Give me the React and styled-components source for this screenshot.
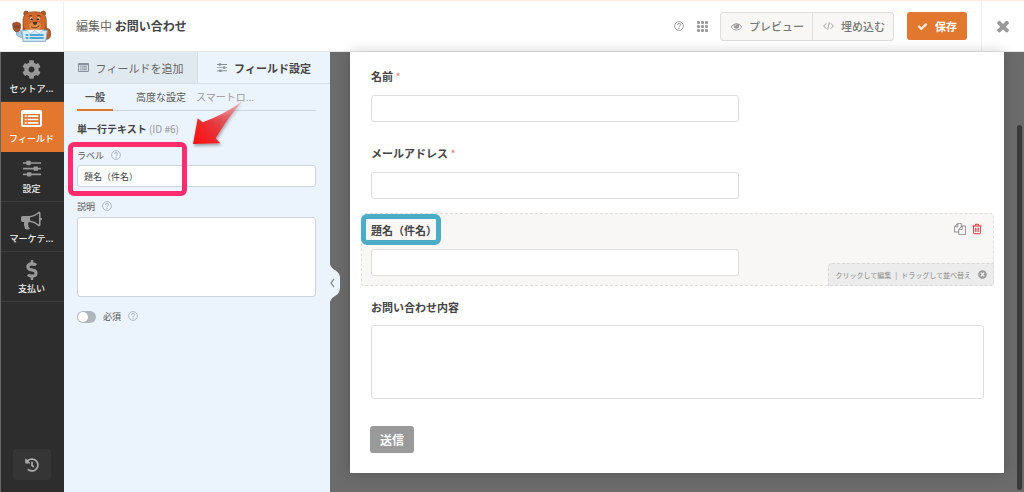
import React, { useState } from "react";
import styled, { createGlobalStyle, css } from "styled-components";
import { FaCog, FaHistory, FaDollarSign, FaTimesCircle } from "react-icons/fa";

const GlobalStyle = createGlobalStyle`
  *, *::before, *::after { box-sizing: border-box; }
  body {
    margin: 0;
    font-family: "Noto Sans CJK JP", "Noto Sans", sans-serif;
    font-size: 11px;
    line-height: 16px;
    color: #444;
    background: #6b6b6b;
  }
  button, input, textarea { font: inherit; color: inherit; margin: 0; }
  button { cursor: pointer; }
  a { color: inherit; text-decoration: none; }
  svg { display: block; flex: none; }
`;

/* ---------- icons ---------- */

const paths = {
  copy: "M1696 384q40 0 68 28t28 68v1216q0 40-28 68t-68 28h-960q-40 0-68-28t-28-68v-288h-544q-40 0-68-28t-28-68v-672q0-40 20-88t48-76l408-408q28-28 76-48t88-20h416q40 0 68 28t28 68v328q68-40 128-40h416zm-544 213l-299 299h299v-299zm-640-384l-299 299h299v-299zm196 647l316-316v-416h-384v416q0 40-28 68t-68 28h-416v640h512v-256q0-40 20-88t48-76zm956 804v-1152h-384v416q0 40-28 68t-68 28h-416v640h896z",
  trash: "M704 736v576q0 14-9 23t-23 9h-64q-14 0-23-9t-9-23v-576q0-14 9-23t23-9h64q14 0 23 9t9 23zm256 0v576q0 14-9 23t-23 9h-64q-14 0-23-9t-9-23v-576q0-14 9-23t23-9h64q14 0 23 9t9 23zm256 0v576q0 14-9 23t-23 9h-64q-14 0-23-9t-9-23v-576q0-14 9-23t23-9h64q14 0 23 9t9 23zm128 724v-948h-896v948q0 22 7 40.5t14.5 27 10.5 8.5h832q3 0 10.5-8.5t14.5-27 7-40.5zm-672-1076h448l-48-117q-7-9-17-11h-317q-10 2-17 11zm928 32v64q0 14-9 23t-23 9h-96v948q0 83-47 143.5t-113 60.5h-832q-66 0-113-58.5t-47-141.5v-952h-96q-14 0-23-9t-9-23v-64q0-14 9-23t23-9h309l70-167q15-37 54-63t79-26h320q40 0 79 26t54 63l70 167h309q14 0 23 9t9 23z",
  bullhorn: "M1664 640q53 0 90.5 37.5t37.5 90.5-37.5 90.5-90.5 37.5v384q0 52-38 90t-90 38q-417-347-812-380-58 19-91 66t-31 100.5 40 92.5q-20 33-23 65.5t6 58 33.5 55 48 50 61.5 50.5q-29 58-111.5 83t-168.5 11.5-132-55.5q-7-23-29.5-87.5t-32-94.5-23-89-15-101 3.5-98.5 22-110.5h-122q-66 0-113-47t-47-113v-192q0-66 47-113t113-47h480q435 0 896-384 52 0 90 38t38 90v384zm-128 604v-954q-394 302-768 343v270q377 42 768 341z",
  eye: "M1664 960q-152-236-381-353 61 104 61 225 0 185-131.5 316.5t-316.5 131.5-316.5-131.5-131.5-316.5q0-121 61-225-229 117-381 353 133 205 333.5 326.5t434.5 121.5 434.5-121.5 333.5-326.5zm-720-384q0-20-14-34t-34-14q-125 0-214.5 89.5t-89.5 214.5q0 20 14 34t34 14 34-14 14-34q0-86 61-147t147-61q20 0 34-14t14-34zm848 384q0 34-20 69-140 230-376.5 368.5t-499.5 138.5-499.5-139-376.5-368q-20-35-20-69t20-69q140-229 376.5-368t499.5-139 499.5 139 376.5 368q20 35 20 69z",
  check: "M1671 566q0 40-28 68l-724 724-136 136q-28 28-68 28t-68-28l-136-136-362-362q-28-28-28-68t28-68l136-136q28-28 68-28t68 28l294 295 656-657q28-28 68-28t68 28l136 136q28 28 28 68z",
  times: "M1490 1322q0 40-28 68l-136 136q-28 28-68 28t-68-28l-294-294-294 294q-28 28-68 28t-68-28l-136-136q-28-28-28-68t28-68l294-294-294-294q-28-28-28-68t28-68l136-136q28-28 68-28t68 28l294 294 294-294q28-28 68-28t68 28l136 136q28 28 28 68t-28 68l-294 294 294 294q28 28 28 68z",
};

const Glyph = ({ name, size = 12, color = "currentColor" }) => (
  <svg width={size} height={size} viewBox="0 0 1792 1792" fill={color} aria-hidden="true">
    <path d={paths[name]} />
  </svg>
);

const HelpIcon = ({ size = 10 }) => (
  <svg width={size} height={size} viewBox="0 0 20 20" fill="none" stroke="currentColor" aria-hidden="true">
    <circle cx="10" cy="10" r="8.8" strokeWidth="1.8" />
    <path d="M7 8q0-3 3-3t3 2.600q0 1.600-1.600 2.500T10 12.300" strokeWidth="2" />
    <path d="M10 13.600v2.200" strokeWidth="2.200" />
  </svg>
);

const GridIcon = () => (
  <svg width="11" height="11" viewBox="0 0 11 11" fill="#999" aria-hidden="true">
    {[0, 4, 8].map((x) =>
      [0, 4, 8].map((y) => <rect key={`${x}-${y}`} x={x} y={y} width="3" height="3" rx="1" />)
    )}
  </svg>
);

const CodeIcon = () => (
  <svg width="11" height="10" viewBox="0 0 24 20" fill="none" stroke="#999" strokeWidth="2" aria-hidden="true">
    <path d="M7 4 1.500 10 7 16M17 4l5.500 6L17 16M14 2l-4 16" />
  </svg>
);

const ListIcon = ({ width, height, color, hole }) => (
  <svg width={width} height={height} viewBox="0 0 63 51" aria-hidden="true">
    <rect width="63" height="51" rx="6" fill={color} />
    <rect x="6" y="12" width="51" height="33" fill={hole} />
    <path
      d="M11 16h6v5h-6zM20 16h32v5H20zM11 26h6v5h-6zM20 26h32v5H20zM11 36h6v5h-6zM20 36h32v5H20z"
      fill={color}
    />
  </svg>
);

const SlidersIcon = ({ width, height }) => (
  <svg width={width} height={height} viewBox="0 0 54 48" fill="currentColor" aria-hidden="true">
    <path d="M0 5h54v5H0zM0 22h54v5H0zM0 39h54v5H0z" />
    <rect x="10" y="1" width="13" height="13" rx="2" />
    <rect x="32" y="18" width="13" height="13" rx="2" />
    <rect x="12" y="35" width="13" height="13" rx="2" />
  </svg>
);

const BearLogo = () => (
  <svg width="40" height="32" viewBox="36 30 120 96" role="img" aria-label="WPForms">
    <path d="M134 88q18-8 18 14 0 16-14 16z" fill="#b95d2b" stroke="#74422d" strokeWidth="2" />
    <path d="M62 90q-12 2-14 12 6 12 22 10z" fill="#a9cce4" stroke="#7398ad" strokeWidth="2" />
    <path d="M38 72q2-6 7-3 6-6 9-1 8-1 8 8 0 18-11 20-13-1-13-24z" fill="#a9552b" stroke="#6f3c28" strokeWidth="2" />
    <path d="M45 76v7m6-8v8m5-6v6" stroke="#71351f" strokeWidth="3" />
    <circle cx="78" cy="40" r="7" fill="#b5592a" stroke="#7b4025" strokeWidth="2" />
    <circle cx="130" cy="40" r="7" fill="#b5592a" stroke="#7b4025" strokeWidth="2" />
    <path d="M69 96V60q0-25 35-25t35 25v36z" fill="#cf6a2c" stroke="#8a4724" strokeWidth="2" />
    <path d="M69 70v26h14q-10-8-14-26m70 0v26h-14q10-8 14-26" fill="#a9532a" />
    <path d="M87 77q0-10 18-10t18 10q-1 13-18 13T87 77" fill="#e18c47" />
    <ellipse cx="94" cy="57" rx="4" ry="5" fill="#f4e6dc" />
    <ellipse cx="115" cy="57" rx="4" ry="5" fill="#f4e6dc" />
    <circle cx="95" cy="58" r="3.5" fill="#372c2a" />
    <circle cx="114" cy="58" r="3.5" fill="#372c2a" />
    <path d="M86 49q5-4 10-1m15 0q6-4 11 1" stroke="#663519" strokeWidth="3" fill="none" />
    <path d="M98 66h14q-1 9-7 9t-7-9" fill="#51302a" />
    <path d="M93 80q14 8 25-3" stroke="#713c21" strokeWidth="3" fill="none" />
    <path d="M66 91h76l-5 33H69z" fill="#d8ecf8" stroke="#83abc2" strokeWidth="3" />
    <path d="M77 89l15 12 12-9 13 9 14-12" fill="#eef8ff" stroke="#9fc0d3" strokeWidth="2" />
    <path d="M77 105h8m4 0h42M77 114h8m4 0h42" stroke="#278fc6" strokeWidth="4" />
  </svg>
);

/* ---------- header ---------- */

const Page = styled.div`
  display: flex;
  flex-direction: column;
  min-height: 100vh;
`;

const Header = styled.header`
  display: flex;
  align-items: center;
  height: 52px;
  background: #fff;
  border-top: 1px solid #faede6;
  border-bottom: 1px solid #e8e8e8;
`;

const LogoCell = styled.div`
  display: flex;
  align-items: center;
  justify-content: center;
  align-self: stretch;
  width: 64px;
  border-right: 1px solid #eee;
`;

const FormTitle = styled.h1`
  flex: 1;
  margin: 0;
  padding-left: 12px;
  font-size: 12px;
  font-weight: 400;
  color: #666;
  strong { font-weight: 700; color: #444; }
`;

const HeaderTools = styled.div`
  display: flex;
  align-items: center;
  align-self: stretch;
`;

const IconButton = styled.button`
  display: flex;
  padding: 0;
  border: 0;
  background: none;
  color: ${(p) => p.$color || "#999"};
  margin-right: ${(p) => p.$gap || 0}px;
`;

const ButtonGroup = styled.div`
  display: flex;
  margin-right: 13px;
  border: 1px solid #ddd;
  border-radius: 3px;
  background: #f8f7f6;
`;

const ToolButton = styled.button`
  display: flex;
  align-items: center;
  gap: 7px;
  height: 27px;
  padding: 0 8px 0 10px;
  border: 0;
  background: none;
  font-weight: 500;
  color: #777;
  & + & { border-left: 1px solid #ddd; }
`;

const SaveButton = styled.button`
  display: flex;
  align-items: center;
  gap: 7px;
  height: 28px;
  margin-right: 14px;
  padding: 0 10px;
  border: 0;
  border-radius: 3px;
  background: #e27730;
  font-weight: 700;
  color: #fff;
`;

const CloseCell = styled.div`
  display: flex;
  align-items: center;
  justify-content: center;
  align-self: stretch;
  width: 43px;
  border-left: 1px solid #eee;
`;

/* ---------- side navigation ---------- */

const Body = styled.div`
  display: flex;
  flex: 1;
`;

const SideNav = styled.nav`
  display: flex;
  flex-direction: column;
  flex: none;
  width: 64px;
  border-left: 1px solid #666;
  background: #2d2d2d;
`;

const NavItem = styled.a`
  display: flex;
  flex-direction: column;
  align-items: center;
  justify-content: space-between;
  height: 50px;
  padding: 8px 2px 4px 0;
  border-bottom: 1px solid #3b3b3b;
  font-size: 9px;
  font-weight: 500;
  color: #eee;
  > svg { color: #999; }
  ${(p) => p.$active && css`
    background: #e27730;
    border-color: #e27730;
    color: #fff;
  `}
`;

const HistoryButton = styled.button`
  display: flex;
  align-items: center;
  justify-content: center;
  width: 38px;
  height: 31px;
  margin: auto 13px 12px 12px;
  border: 0;
  border-radius: 3px;
  background: #353535;
  color: #aaa;
`;

/* ---------- settings panel ---------- */

const Panel = styled.aside`
  position: relative;
  flex: none;
  width: 266px;
  background: #ebf3fc;
`;

const Tabs = styled.div`
  display: grid;
  grid-template-columns: 1fr 1fr;
`;

const Tab = styled.button`
  display: flex;
  align-items: center;
  justify-content: center;
  gap: 7px;
  height: 32px;
  padding: 0;
  border: 0;
  border-bottom: 1px solid #d6dfe8;
  background: ${(p) => (p.$active ? "#ebf3fc" : "#e0e8f0")};
  font-weight: ${(p) => (p.$active ? 700 : 400)};
  color: ${(p) => (p.$active ? "#444" : "#666")};
  > svg { color: #86919b; }
  & + & { border-left: 1px solid #d6dfe8; }
`;

const PanelBody = styled.div`
  padding: 0 14px 0 13px;
`;

const SubTabs = styled.div`
  display: flex;
  height: 27px;
  border-bottom: 1px solid #ced7e0;
`;

const SubTab = styled.button`
  height: 27px;
  padding: ${(p) => p.$pad};
  border: 0;
  border-bottom: 2px solid ${(p) => (p.$active ? "#e27730" : "transparent")};
  background: none;
  font-size: 10px;
  font-weight: ${(p) => (p.$active ? 700 : 400)};
  color: ${(p) => (p.$muted ? "#999" : "#555")};
`;

const FieldName = styled.h2`
  margin: 10px 0 9px;
  font-size: 10px;
  line-height: 16px;
  font-weight: 700;
  span { font-weight: 400; color: #999; }
`;

const OptionRow = styled.div`
  position: relative;
  margin-bottom: 10px;
`;

const OptionHead = styled.div`
  display: flex;
  align-items: center;
  gap: 7px;
  height: 19px;
  font-size: 9px;
  color: #555;
  > svg { color: #a9b3bd; margin-bottom: 2px; }
`;

const boxed = css`
  display: block;
  width: 100%;
  border: 1px solid #ccd3da;
  border-radius: 3px;
  background: #fff;
  outline: 0;
  resize: none;
`;

const OptionInput = styled.input`
  ${boxed}
  height: 22px;
  padding: 0 6px;
  font-size: 9px;
`;

const OptionArea = styled.textarea`
  ${boxed}
  height: 80px;
  margin-top: 1px;
`;

const ToggleRow = styled.div`
  display: flex;
  align-items: center;
  gap: 7px;
  padding-top: 2px;
  font-size: 9px;
  color: #555;
  > svg { color: #a9b3bd; margin-bottom: 2px; }
`;

const Toggle = styled.input`
  appearance: none;
  width: 19px;
  height: 12px;
  border-radius: 6px;
  background: #b0b6bd;
  &::before {
    content: "";
    display: block;
    width: 10px;
    height: 10px;
    margin: 1px;
    border-radius: 50%;
    background: #fff;
  }
  &:checked { background: #e27730; }
  &:checked::before { margin-left: 8px; }
`;

const CollapseButton = styled.button`
  position: absolute;
  top: 212px;
  left: 100%;
  z-index: 1;
  padding: 0;
  border: 0;
  background: none;
`;

/* ---------- annotations over the panels ---------- */

const Callout = styled.span`
  position: absolute;
  inset: ${(p) => p.$inset};
  border: 5px solid ${(p) => p.$color};
  border-radius: 6px;
  pointer-events: none;
`;

const ArrowMark = styled.svg`
  position: absolute;
  top: 44px;
  left: 125px;
  pointer-events: none;
`;

/* ---------- form preview ---------- */

const Preview = styled.main`
  position: relative;
  flex: 1;
  min-width: 0;
  padding: 0 20px 19px;
  background: #6b6b6b;
`;

const ScrollThumb = styled.span`
  position: absolute;
  top: 73px;
  right: 2px;
  bottom: 2px;
  width: 5px;
  border-radius: 3px;
  background: #3a3a3a;
`;

const FormSheet = styled.form`
  display: flex;
  flex-direction: column;
  gap: 4px;
  padding: 7px 10px 20px 11px;
  background: #fff;
  box-shadow: 0 0 12px rgba(0, 0, 0, 0.2);
`;

const Field = styled.div`
  position: relative;
  padding: 8px 9px 9px;
  border: 1px dashed ${(p) => (p.$selected ? "#ddd" : "transparent")};
  border-radius: 4px;
  background: ${(p) => (p.$selected ? "#f8f7f6" : "none")};
`;

const FieldLabel = styled.label`
  display: block;
  margin-bottom: ${(p) => p.$gap || 11}px;
  font-weight: 700;
  span { font-weight: 400; color: #e08080; }
`;

const LabelWrap = styled.div`
  position: relative;
  width: max-content;
`;

const FieldInput = styled.input`
  ${boxed}
  width: 60%;
  height: 27px;
  border-color: #ddd;
`;

const FieldArea = styled.textarea`
  ${boxed}
  height: 74px;
  border-color: #ddd;
`;

const FieldActions = styled.div`
  position: absolute;
  top: 9px;
  right: 10px;
  display: flex;
  gap: 5px;
`;

const FieldHint = styled.div`
  position: absolute;
  right: -1px;
  bottom: -1px;
  display: flex;
  align-items: center;
  gap: 7px;
  height: 23px;
  padding: 0 6px;
  border: 1px dashed #d8d8d8;
  border-radius: 4px 0;
  background: #ececec;
  font-size: 7px;
  font-weight: 500;
  color: #999;
  span { margin: 0 4px; }
`;

const SubmitButton = styled.button`
  align-self: flex-start;
  height: 27px;
  margin: 13px 9px 0;
  padding: 0 10px;
  border: 0;
  border-radius: 3px;
  background: #999;
  font-size: 12px;
  font-weight: 700;
  color: #fff;
`;

const navItems = [
  { label: "セットア...", icon: <FaCog size={19} /> },
  { label: "フィールド", icon: <ListIcon width={21} height={17} color="#fff" hole="#e27730" />, active: true },
  { label: "設定", icon: <SlidersIcon width={18} height={17} /> },
  { label: "マーケテ...", icon: <Glyph name="bullhorn" size={21} /> },
  { label: "支払い", icon: <FaDollarSign size={20} /> },
];

export default function App() {
  const [label, setLabel] = useState("題名（件名）");

  return (
    <Page>
      <GlobalStyle />
      <Header>
        <LogoCell><BearLogo /></LogoCell>
        <FormTitle>編集中 <strong>お問い合わせ</strong></FormTitle>
        <HeaderTools>
          <IconButton type="button" aria-label="ヘルプ" $gap={13}><HelpIcon /></IconButton>
          <IconButton type="button" aria-label="メニュー" $gap={12}><GridIcon /></IconButton>
          <ButtonGroup>
            <ToolButton type="button"><Glyph name="eye" size={11} color="#999" />プレビュー</ToolButton>
            <ToolButton type="button"><CodeIcon />埋め込む</ToolButton>
          </ButtonGroup>
          <SaveButton type="button"><Glyph name="check" size={11} color="#fbe5d7" />保存</SaveButton>
          <CloseCell>
            <IconButton type="button" aria-label="閉じる"><Glyph name="times" size={18} /></IconButton>
          </CloseCell>
        </HeaderTools>
      </Header>

      <Body>
        <SideNav>
          {navItems.map((item) => (
            <NavItem key={item.label} href="#" $active={item.active}>
              {item.icon}
              {item.label}
            </NavItem>
          ))}
          <HistoryButton type="button" aria-label="履歴"><FaHistory size={14} /></HistoryButton>
        </SideNav>

        <Panel>
          <Tabs>
            <Tab type="button">
              <ListIcon width={11} height={9} color="#86919b" hole="#e0e8f0" />
              フィールドを追加
            </Tab>
            <Tab type="button" $active>
              <SlidersIcon width={10} height={9} />
              フィールド設定
            </Tab>
          </Tabs>
          <PanelBody>
            <SubTabs>
              <SubTab type="button" $active $pad="0 8px">一般</SubTab>
              <SubTab type="button" $pad="0 10px 0 23px">高度な設定</SubTab>
              <SubTab type="button" $muted $pad="0">スマートロ...</SubTab>
            </SubTabs>
            <FieldName>単一行テキスト <span>(ID #6)</span></FieldName>
            <OptionRow>
              <OptionHead><label htmlFor="opt-label">ラベル</label><HelpIcon /></OptionHead>
              <OptionInput id="opt-label" value={label} onChange={(e) => setLabel(e.target.value)} />
              <Callout $color="#ff2d6d" $inset="-4px 129px -9px -9px" />
            </OptionRow>
            <OptionRow>
              <OptionHead><label htmlFor="opt-desc">説明</label><HelpIcon /></OptionHead>
              <OptionArea id="opt-desc" />
            </OptionRow>
            <ToggleRow>
              <Toggle type="checkbox" id="opt-required" />
              <label htmlFor="opt-required">必須</label>
              <HelpIcon />
            </ToggleRow>
          </PanelBody>
          <ArrowMark width="60" height="56" viewBox="0 0 60 56" aria-hidden="true">
            <defs>
              <linearGradient id="arrow" x1="4" y1="48" x2="54" y2="4" gradientUnits="userSpaceOnUse">
                <stop offset="0" stopColor="#ff0d0d" />
                <stop offset="0.400" stopColor="#e63338" />
                <stop offset="1" stopColor="#e63338" stopOpacity="0.200" />
              </linearGradient>
              <filter id="arrowShadow" x="-20%" y="-20%" width="140%" height="140%">
                <feDropShadow dx="1" dy="2" stdDeviation="1.500" floodOpacity="0.350" />
              </filter>
            </defs>
            <path
              d="M4 48 8.700 22.300 13.700 26.300Q36 18 54 4.700 40 20 26.700 42.300L31.300 47.300Z"
              fill="url(#arrow)"
              filter="url(#arrowShadow)"
            />
          </ArrowMark>
          <CollapseButton type="button" aria-label="パネルを閉じる">
            <svg width="11" height="38" viewBox="0 0 11 38" aria-hidden="true">
              <path d="M0 0q1 4 5 6 5 3 5 8v10q0 5-5 8-4 2-5 6z" fill="#ebf3fc" />
              <path d="M4 15 1 19l3 4" fill="none" stroke="#86919b" strokeWidth="1.300" />
            </svg>
          </CollapseButton>
        </Panel>

        <Preview>
          <FormSheet onSubmit={(e) => e.preventDefault()}>
            <Field>
              <FieldLabel htmlFor="f-name">名前 <span>*</span></FieldLabel>
              <FieldInput id="f-name" />
            </Field>
            <Field>
              <FieldLabel htmlFor="f-mail">メールアドレス <span>*</span></FieldLabel>
              <FieldInput id="f-mail" />
            </Field>
            <Field $selected>
              <LabelWrap>
                <FieldLabel htmlFor="f-subject">{label}</FieldLabel>
                <Callout $color="#4bacc6" $inset="-8px -4px -7px -10px" />
              </LabelWrap>
              <FieldInput id="f-subject" />
              <FieldActions>
                <IconButton type="button" aria-label="複製" $color="#888"><Glyph name="copy" size={12} /></IconButton>
                <IconButton type="button" aria-label="削除" $color="#d63637"><Glyph name="trash" size={12} /></IconButton>
              </FieldActions>
              <FieldHint>
                <div>クリックして編集<span>|</span>ドラッグして並べ替え</div>
                <FaTimesCircle size={9} />
              </FieldHint>
            </Field>
            <Field>
              <FieldLabel htmlFor="f-body" $gap={10}>お問い合わせ内容</FieldLabel>
              <FieldArea id="f-body" />
            </Field>
            <SubmitButton type="submit">送信</SubmitButton>
          </FormSheet>
          <ScrollThumb />
        </Preview>
      </Body>
    </Page>
  );
}
